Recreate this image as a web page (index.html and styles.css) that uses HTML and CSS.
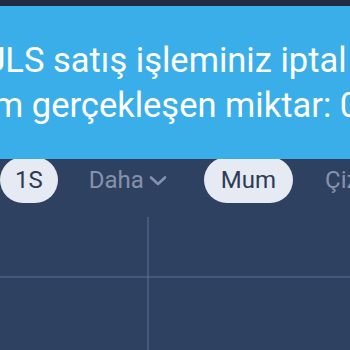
FILE: index.html
```html
<!DOCTYPE html>
<html lang="tr">
<head>
<meta charset="utf-8">
<link rel="stylesheet" href="styles.css">
</head>
<body>
<div class="app">
  <div class="topbar"></div>
  <div class="header-space"></div>
  <div class="tabs">
    <span class="pill pill-1s">1S</span>
    <span class="tab tab-more">Daha
      <svg class="chev" width="18" height="12" viewBox="0 0 18 12"><path d="M2 2.5 L9 9 L16 2.5" fill="none" stroke="#8592ab" stroke-width="2.6" stroke-linecap="round" stroke-linejoin="round"/></svg>
    </span>
    <span class="pill pill-mum">Mum</span>
    <span class="tab tab-ciz">Çizim</span>
  </div>
  <div class="chart">
    <div class="cell"></div>
    <div class="vline top"></div>
    <div class="cell"></div>
    <div class="hline"></div>
    <div class="cross"></div>
    <div class="hline"></div>
    <div class="cell"></div>
    <div class="vline"></div>
    <div class="cell"></div>
  </div>
  <div class="banner">
    <div class="line line1">ULS satış işleminiz iptal</div>
    <div class="line line2">m gerçekleşen miktar: 0</div>
  </div>
</div>
</body>
</html>
```
FILE: styles.css
```css
html, body {
  margin: 0;
  padding: 0;
  background: #2f4161;
  overflow: hidden;
}
.app {
  position: relative;
  width: 350px;
  height: 350px;
  overflow: hidden;
  display: flex;
  flex-direction: column;
  font-family: Roboto, "Liberation Sans", sans-serif;
}
.topbar {
  height: 6px;
  background: #222a44;
  flex: none;
}
.header-space {
  height: 151px;
  flex: none;
}
.tabs {
  flex: none;
  height: 46px;
  display: flex;
  align-items: center;
  white-space: nowrap;
  font-size: 24px;
}
.pill {
  height: 46px;
  box-sizing: border-box;
  border-radius: 23px;
  background: #e5eaf3;
  color: #2f3b56;
  display: flex;
  align-items: center;
  line-height: 1;
}
.pill-1s {
  padding: 0 15px;
  margin-left: 0;
}
.tab {
  color: #8592ab;
  display: flex;
  align-items: center;
  line-height: 1;
}
.tab-more {
  margin-left: 31px;
}
.chev {
  margin-left: 5px;
  margin-top: 1px;
}
.pill-mum {
  margin-left: 37px;
  padding: 0 17px;
}
.tab-ciz {
  margin-left: 32px;
}
.chart {
  flex: 1;
  padding-top: 14px;
  display: grid;
  grid-template-columns: 147px 2px 1fr;
  grid-template-rows: 59px 2px 1fr;
}
.vline {
  background: #47587b;
}
.hline {
  background: #47587b;
}
.cross {
  background: #52628a;
}
.banner {
  position: absolute;
  left: 0;
  top: 6px;
  width: 350px;
  height: 153px;
  box-sizing: border-box;
  padding-top: 32px;
  background: #3aaee9;
  color: #ffffff;
  font-size: 34.5px;
  line-height: 45px;
  white-space: nowrap;
  overflow: hidden;
}
.line1 {
  margin-left: -17px;
}
.line2 {
  margin-left: -7px;
}
```
